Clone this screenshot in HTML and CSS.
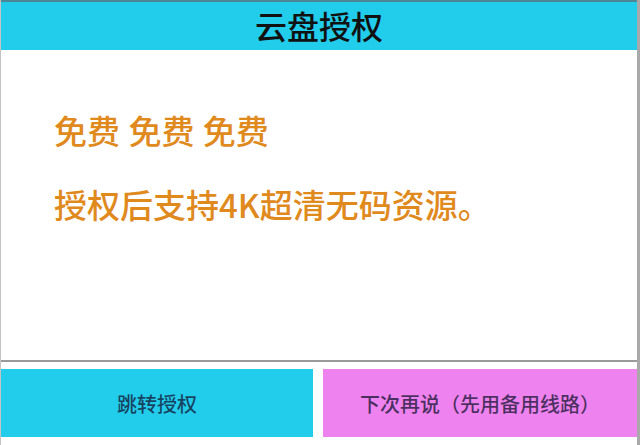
FILE: index.html
```html
<!DOCTYPE html>
<html lang="zh-CN">
<head>
<meta charset="utf-8">
<title>云盘授权</title>
<link rel="stylesheet" href="styles.css">
</head>
<body>
<div class="page">
  <div class="topstrip"></div>
  <header class="header">云盘授权</header>
  <main class="content">
    <p class="line">免费 免费 免费</p>
    <p class="line second">授权后支持4K超清无码资源。</p>
  </main>
  <div class="actions">
    <button class="btn btn-auth">跳转授权</button>
    <button class="btn btn-later">下次再说（先用备用线路）</button>
  </div>
</div>
</body>
</html>
```
FILE: styles.css
```css
html, body {
  margin: 0;
  padding: 0;
  background: #ffffff;
}
body {
  font-family: "Noto Sans CJK SC", "Noto Sans", sans-serif;
}
.page {
  width: 640px;
  height: 445px;
  box-sizing: border-box;
  border-left: 1px solid #c4c4c4;
  border-right: 3px solid #a9a9a9;
  display: flex;
  flex-direction: column;
  overflow: hidden;
}
.topstrip {
  height: 2px;
  background: #4d8796;
}
.header {
  height: 48px;
  background: #22cceb;
  color: #111;
  font-size: 32px;
  font-weight: 500;
  line-height: 46px;
  text-align: center;
}
.content {
  border-bottom: 2px solid #9a9a9a;
  padding: 59px 0 0 53px;
  box-sizing: border-box;
  height: 312px;
}
.line {
  margin: 0;
  font-size: 33px;
  font-weight: 500;
  line-height: 42px;
  color: #e08a1e;
  word-spacing: 1px;
}
.second {
  margin-top: 32px;
}
.actions {
  margin-top: 7px;
  display: flex;
  gap: 10px;
  height: 68px;
}
.btn {
  border: none;
  margin: 0;
  padding: 0;
  font-family: "Noto Sans CJK SC", "Noto Sans", sans-serif;
  font-size: 20px;
  font-weight: 500;
  color: rgba(20, 20, 50, 0.75);
  cursor: pointer;
}
.btn-auth {
  width: 312px;
  background: #22cceb;
}
.btn-later {
  flex: 1;
  background: #ee82ee;
}
```
